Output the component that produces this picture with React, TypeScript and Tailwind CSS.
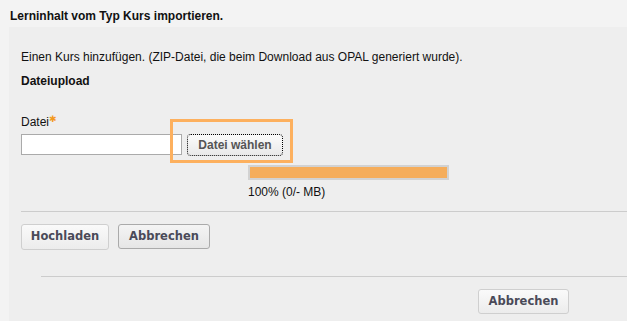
export default function App() {
  return (
    <div className="w-[627px] h-[321px] overflow-hidden bg-[#f3f3f3] font-['Liberation_Sans',Arial,sans-serif] text-[12px] text-[#111]">
      <div className="h-[27px] pl-[10px] pt-[8px] font-bold leading-[16px]">
        Lerninhalt vom Typ Kurs importieren.
      </div>

      <div className="ml-[9px] h-[294px] bg-[#eeeeee] pl-[12px] pt-[22px]">
        <p className="leading-[16px]">
          Einen Kurs hinzufügen. (ZIP-Datei, die beim Download aus OPAL generiert wurde).
        </p>
        <p className="mt-[8px] font-bold leading-[16px]">Dateiupload</p>

        <p className="mt-[25px] leading-[16px]">
          Datei
          <span className="relative -top-[4px] font-['DejaVu_Sans',sans-serif] text-[9px] leading-[10px] text-[#f39a1e]">✱</span>
        </p>

        <div className="relative mt-[4px] flex items-start">
          <input type="text" className="h-[21px] w-[161px] border border-[#aaaaaa] bg-white outline-none" />
          <button className="ml-[5px] h-[22px] w-[96px] rounded-[4px] border border-dotted border-black bg-gradient-to-b from-[#fbfbfb] to-[#e9e9e9] font-bold text-[#555] leading-[16px]">
            Datei wählen
          </button>
          <div className="absolute left-[149px] top-[-15px] h-[44px] w-[123px] border-[3px] border-[#fdb05e]" />
        </div>

        <div className="ml-[227px] mt-[9px] h-[15px] w-[201px] border-2 border-[#d2d2d2] bg-[#f5ad5b]" />
        <p className="ml-[227px] mt-[4px] leading-[16px]">100% (0/- MB)</p>

        <div className="mt-[11px] border-t border-[#cccccc]" />

        <div className="mt-[12px] flex items-start gap-[9px] font-['DejaVu_Sans',Verdana,sans-serif] text-[11.5px] font-bold text-[#4a4a58]">
          <button className="h-[26px] w-[88px] rounded-[3px] border border-[#cfcfcf] bg-gradient-to-b from-[#fafafa] to-[#ececec]">
            Hochladen
          </button>
          <button className="h-[25px] w-[92px] rounded-[3px] border border-[#aaaaaa] bg-gradient-to-b from-[#f4f4f4] to-[#e6e6e6]">
            Abbrechen
          </button>
        </div>

        <div className="ml-[20px] mt-[26px] border-t border-[#cccccc]" />

        <div className="mt-[12px] flex justify-end pr-[58px] font-['DejaVu_Sans',Verdana,sans-serif] text-[11.5px] font-bold text-[#4a4a58]">
          <button className="h-[25px] w-[91px] rounded-[3px] border border-[#cfcfcf] bg-gradient-to-b from-[#fafafa] to-[#ececec]">
            Abbrechen
          </button>
        </div>
      </div>
    </div>
  );
}
